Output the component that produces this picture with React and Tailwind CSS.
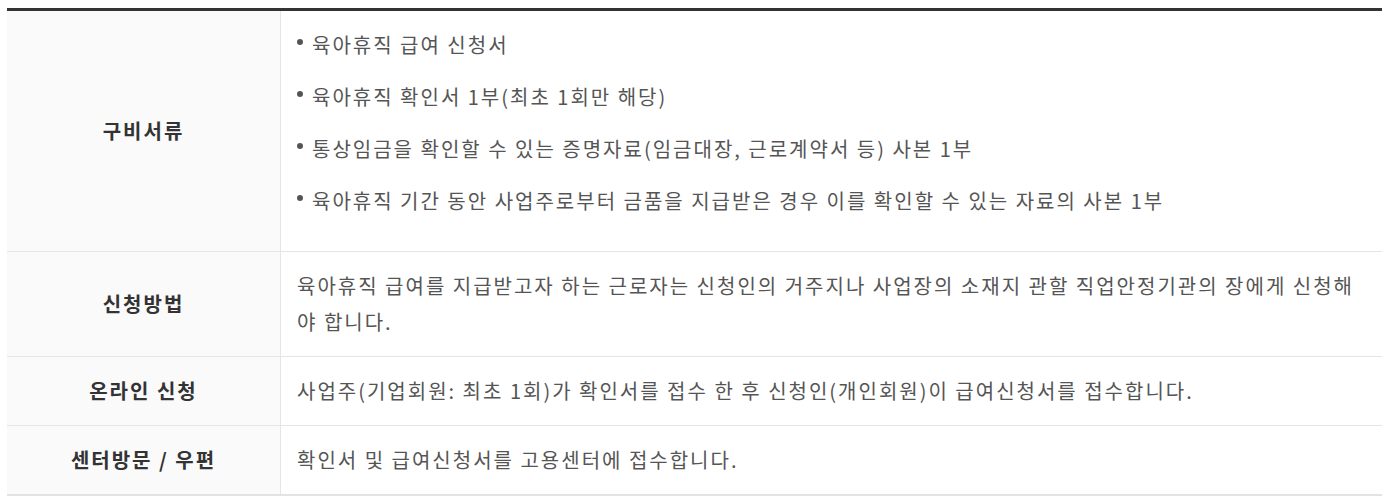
const docs = [
  '육아휴직 급여 신청서',
  '육아휴직 확인서 1부(최초 1회만 해당)',
  '통상임금을 확인할 수 있는 증명자료(임금대장, 근로계약서 등) 사본 1부',
  '육아휴직 기간 동안 사업주로부터 금품을 지급받은 경우 이를 확인할 수 있는 자료의 사본 1부',
]

function Row({ title, children, last }) {
  return (
    <div className={'flex ' + (last ? '' : 'border-b border-[#e5e5e5]')}>
      <div className="w-[274px] shrink-0 bg-[#fafafa] border-r border-[#e5e5e5] flex items-center justify-center text-[20px] tracking-[2px] font-bold text-[#333]">
        {title}
      </div>
      <div className="flex-1 pl-[16px] pr-[16px] py-[16px] text-[20px] tracking-[2px] leading-[36px] text-[#555]">
        {children}
      </div>
    </div>
  )
}

export default function App() {
  return (
    <div className="bg-white w-[1395px] h-[503px] pt-[8px] pl-[7px]" style={{ fontFamily: '"Noto Sans CJK KR", "Noto Sans", sans-serif' }}>
      <div className="w-[1375px] border-t-[3px] border-[#333] border-b-2 border-b-[#e3e3e3]">
        <Row title="구비서류">
          <ul>
            {docs.map((d) => (
              <li key={d} className="flex items-center mb-[16px]">
                <span className="w-[6px] h-[6px] rounded-full bg-[#555] mr-[9px] -mt-[6px] shrink-0"></span>
                {d}
              </li>
            ))}
          </ul>
        </Row>
        <Row title="신청방법">
          육아휴직 급여를 지급받고자 하는 근로자는 신청인의 거주지나 사업장의 소재지 관할 직업안정기관의 장에게 신청해야 합니다.
        </Row>
        <Row title="온라인 신청">
          사업주(기업회원: 최초 1회)가 확인서를 접수 한 후 신청인(개인회원)이 급여신청서를 접수합니다.
        </Row>
        <Row title="센터방문 / 우편" last>
          확인서 및 급여신청서를 고용센터에 접수합니다.
        </Row>
      </div>
    </div>
  )
}
